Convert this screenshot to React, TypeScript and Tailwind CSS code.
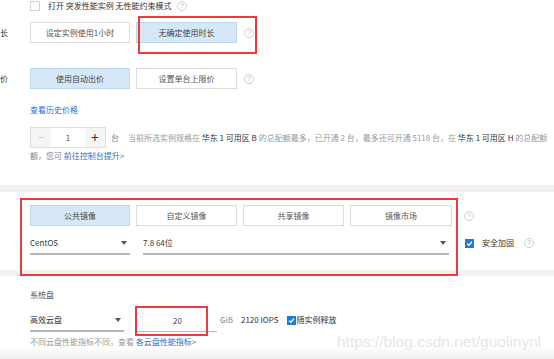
import type { ReactNode } from "react";

const FONT = "font-['Microsoft_YaHei','Noto_Sans_CJK_SC',sans-serif]";

function Help() {
  return (
    <svg width="10" height="10" viewBox="0 0 10 10" className="shrink-0">
      <circle cx="5" cy="5" r="4.5" fill="none" stroke="#c4c4c4" strokeWidth="0.8" />
      <text x="5" y="7.4" textAnchor="middle" fontSize="7" fill="#bbb" fontFamily="Liberation Sans, sans-serif">
        ?
      </text>
    </svg>
  );
}

function Check({ on }: { on?: boolean }) {
  if (!on) {
    return <span className="block h-[10px] w-[10px] shrink-0 border border-[#d0d0d0] bg-white" />;
  }
  return (
    <svg width="9" height="9" viewBox="0 0 9 9" className="shrink-0">
      <rect width="9" height="9" fill="#1f7ad8" />
      <path d="M2 4.6 L3.8 6.3 L7 2.8" fill="none" stroke="#fff" strokeWidth="1.3" />
    </svg>
  );
}

function Arrow() {
  return (
    <svg width="6" height="4" viewBox="0 0 6 4" className="shrink-0">
      <path d="M0 0 H6 L3 4 Z" fill="#555" />
    </svg>
  );
}

function Btn({ active, w, children }: { active?: boolean; w: string; children: ReactNode }) {
  return (
    <div
      className={`flex h-[21px] items-center justify-center border text-[8px] ${w} ${
        active ? "border-[#bcd8f1] bg-[#d6e8f7] text-[#444]" : "border-[#dcdcdc] bg-white text-[#555]"
      }`}
    >
      {children}
    </div>
  );
}

function Select({ w, label, arrow = true }: { w: string; label: string; arrow?: boolean }) {
  return (
    <div className={`flex flex-col ${w}`}>
      <div className="flex h-[20px] items-center justify-between pr-[3px] text-[8px] text-[#333]">
        <span>{label}</span>
        {arrow && <Arrow />}
      </div>
      <div className="h-[2px] bg-[#b5b5b5]" />
    </div>
  );
}

function RedBox({ className }: { className: string }) {
  return <div className={`pointer-events-none absolute border-2 border-[#ec3b3f] ${className}`} />;
}

export default function App() {
  return (
    <div className={`relative h-[359px] w-[554px] overflow-hidden bg-white ${FONT}`}>
      {/* instance options */}
      <section className="h-[185px] pl-[30px]">
        <div className="flex h-[11px] items-center">
          <Check />
          <span className="ml-[8px] text-[8px] leading-[11px] text-[#333]">打开 突发性能实例 无性能约束模式</span>
          <span className="ml-[5px]">
            <Help />
          </span>
        </div>

        <div className="relative mt-[11px] flex items-center">
          <span className="absolute -left-[30px] text-[8px] text-[#333]">长</span>
          <Btn w="w-[100px]">设定实例使用1小时</Btn>
          <div className="relative ml-[6px]">
            <Btn w="w-[101px]" active>
              无确定使用时长
            </Btn>
            <RedBox className="-top-[6px] left-[2px] h-[38px] w-[119px]" />
          </div>
          <span className="ml-[7px]">
            <Help />
          </span>
        </div>

        <div className="relative mt-[25px] flex items-center">
          <span className="absolute -left-[30px] text-[8px] text-[#333]">价</span>
          <Btn w="w-[100px]" active>
            使用自动出价
          </Btn>
          <div className="ml-[6px]">
            <Btn w="w-[101px]">设置单台上限价</Btn>
          </div>
          <span className="ml-[7px]">
            <Help />
          </span>
        </div>

        <div className="mt-[15px] text-[8px] leading-[12px] text-[#1f74cf]">查看历史价格</div>

        <div className="mt-[11px] flex items-center whitespace-nowrap text-[8px]">
          <div className="flex h-[21px] w-[76px] border border-[#e0e0e0]">
            <span className="flex w-[20px] items-center justify-center bg-[#f5f5f5] text-[11px] text-[#c8c8c8]">−</span>
            <span className="flex flex-1 items-center justify-center text-[#555]">1</span>
            <span className="flex w-[20px] items-center justify-center bg-[#f5f5f5] text-[14px] text-[#333]">+</span>
          </div>
          <span className="ml-[5px] text-[#888]">台</span>
          <span className="ml-[9px] text-[#999]">
            当前所选实例规格在 <span className="text-[#333]">华东 1 可用区 B</span> 的总配额最多，已开通 2 台，最多还可开通 5118 台，在{" "}
            <span className="text-[#333]">华东 1 可用区 H</span> 的总配额
          </span>
        </div>
        <div className="mt-[2px] text-[8px] leading-[12px] text-[#888]">
          额，您可 <span className="text-[#1f74cf]">前往控制台提升&gt;</span>
        </div>
      </section>

      <div className="h-[7px] bg-[#f1f2f4]" />

      {/* image */}
      <section className="relative h-[78px] pl-[30px] pt-[13px]">
        <RedBox className="left-[20px] top-[6px] z-10 h-[78px] w-[438px]" />
        <div className="flex items-center gap-[6px]">
          <Btn w="w-[100px]" active>
            公共镜像
          </Btn>
          <Btn w="w-[101px]">自定义镜像</Btn>
          <Btn w="w-[101px]">共享镜像</Btn>
          <Btn w="w-[102px]">镜像市场</Btn>
          <span className="ml-[6px]">
            <Help />
          </span>
        </div>
        <div className="mt-[7px] flex items-end">
          <Select w="w-[100px]" label="CentOS" />
          <div className="ml-[13px]">
            <Select w="w-[306px]" label="7.8 64位" />
          </div>
          <div className="mb-[6px] ml-[16px] flex items-center">
            <Check on />
            <span className="ml-[8px] text-[8px] text-[#333]">安全加固</span>
            <span className="ml-[10px]">
              <Help />
            </span>
          </div>
        </div>
      </section>

      <div className="h-[6px] bg-[#f1f2f4]" />

      {/* system disk */}
      <section className="relative h-[83px] bg-gradient-to-b from-white from-[85%] to-[#eeeeee] pl-[30px] pt-[13px]">
        <div className="text-[8px] leading-[12px] text-[#555]">系统盘</div>
        <div className="mt-[9px] flex items-end">
          <Select w="w-[94px]" label="高效云盘" />
          <div className="relative ml-[11px] flex w-[82px] flex-col">
            <div className="flex h-[20px] items-center pl-[38px] text-[8px] text-[#444]">20</div>
            <div className="h-[1px] bg-[#b5b5b5]" />
            <RedBox className="-top-[5px] left-0 h-[30px] w-[73px]" />
          </div>
          <div className="mb-[6px] flex items-center text-[8px]">
            <span className="ml-[3px] text-[#888]">GiB</span>
            <span className="ml-[8px] text-[#333]">2120 IOPS</span>
            <span className="ml-[8px]">
              <Check on />
            </span>
            <span className="ml-px text-[#333]">随实例释放</span>
          </div>
        </div>
        <div className="mt-[4px] text-[8px] leading-[12px] text-[#999]">
          不同云盘性能指标不同，查看 <span className="text-[#1f74cf]">各云盘性能指标&gt;</span>
        </div>
        <div className="absolute left-[337px] top-[57px] font-['Liberation_Sans',sans-serif] text-[15.5px] leading-[18px] text-[#e6e6e6]">
          https://blog.csdn.net/guolinynl
        </div>
      </section>
    </div>
  );
}
